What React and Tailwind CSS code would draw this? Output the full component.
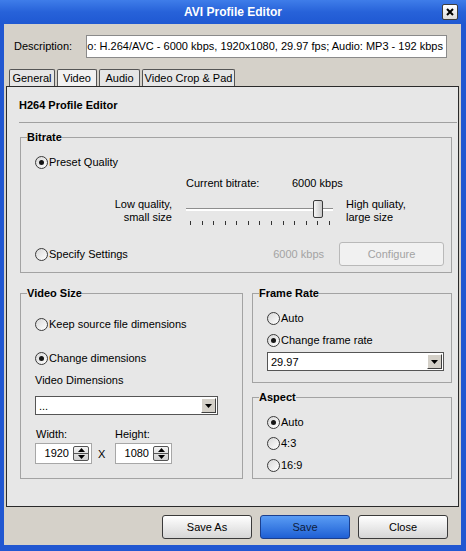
import React from 'react';

// small pieces of the classic dialog chrome
function Radio({ checked, label }) {
  return (
    <div className="flex h-[16px] items-center">
      <span className="flex h-[13px] w-[13px] items-center justify-center rounded-full border border-[#3a3a3a] bg-linear-to-br from-[#d8d8d8] to-[#ffffff]">
        {checked && <span className="h-[5px] w-[5px] rounded-full bg-[#151515]" />}
      </span>
      <span className="ml-[1px]">{label}</span>
    </div>
  );
}

function Group({ title, className, children }) {
  return (
    <fieldset className={`min-w-0 border border-[#a3a3a3] ${className}`}>
      <legend className="ml-[6px] font-bold leading-[14px]">{title}</legend>
      {children}
    </fieldset>
  );
}

function DropArrow() {
  return (
    <span className="flex h-[15px] w-[15px] items-center justify-center border border-t-white border-l-white border-r-[#404040] border-b-[#404040] bg-[#d4d0c8]">
      <svg width="7" height="4" viewBox="0 0 7 4">
        <path d="M0 0h7L3.5 4z" fill="#000" />
      </svg>
    </span>
  );
}

function Select({ value, className }) {
  return (
    <div className={`flex h-[19px] items-center justify-between border border-[#555] bg-white pl-[3px] pr-px ${className}`}>
      <span className="leading-[14px]">{value}</span>
      <DropArrow />
    </div>
  );
}

function Spin({ value }) {
  return (
    <div className="flex h-[21px] w-[57px] items-center justify-end border border-[#a7a7a7] bg-white pr-[2px]">
      <span className="mr-[4px]">{value}</span>
      <div className="flex h-[15px] w-[16px] flex-col rounded-[2px] border border-[#555] bg-linear-to-b from-[#f4f4f4] to-[#cfcfcf]">
        <span className="flex flex-1 items-center justify-center border-b border-[#555]">
          <svg width="7" height="4" viewBox="0 0 7 4">
            <path d="M0 4h7L3.5 0z" fill="#000" />
          </svg>
        </span>
        <span className="flex flex-1 items-center justify-center">
          <svg width="7" height="4" viewBox="0 0 7 4">
            <path d="M0 0h7L3.5 4z" fill="#000" />
          </svg>
        </span>
      </div>
    </div>
  );
}

function Slider() {
  const ticks = Array.from({ length: 13 });
  return (
    <div className="relative h-[28px] w-[147px]">
      <div className="absolute left-0 right-0 top-[10px] h-[3px] border-t border-[#8e8e8e] bg-white" />
      <div className="absolute left-[127px] top-[2px] h-[18px] w-[10px] rounded-[2px] border border-[#3a3a3a] bg-linear-to-r from-[#f6f6f6] to-[#c9c9c9]" />
      <div className="absolute left-[4px] right-[3px] top-[23px] flex justify-between">
        {ticks.map((_, i) => (
          <span key={i} className="h-[4px] w-px bg-[#333]" />
        ))}
      </div>
    </div>
  );
}

function Button({ children, primary }) {
  const look = primary
    ? 'border-[#1b3f8e] bg-linear-to-b from-[#5a9cf4] to-[#1e5fd4] text-[#0d1c3d]'
    : 'border-[#3a3a3a] bg-linear-to-b from-[#ffffff] to-[#d6d6d6] text-black';
  return (
    <button className={`flex h-[24px] w-[90px] items-center justify-center rounded-[3px] border ${look}`}>
      {children}
    </button>
  );
}

const tabs = [
  { name: 'General', w: 'w-[46px]' },
  { name: 'Video', w: 'w-[40px]', active: true },
  { name: 'Audio', w: 'w-[41px]' },
  { name: 'Video Crop & Pad', w: 'w-[93px]' },
];

export default function App() {
  return (
    <div className="flex h-[551px] w-[466px] flex-col bg-[#2157d1] font-['Liberation_Sans',Arial,sans-serif] text-[11px] text-black">
      {/* Title bar */}
      <div className="flex h-[24px] items-center bg-linear-to-b from-[#3f7de9] via-[#2762d9] to-[#1f58d2] pr-[8px]">
        <div className="w-[16px]" />
        <div className="flex-1 pl-[8px] text-center text-[12px] font-bold text-white">AVI Profile Editor</div>
        <div className="flex h-[16px] w-[16px] items-center justify-center rounded-[2px] border border-[#3d3d3d] bg-linear-to-b from-[#ffffff] to-[#dcdcdc]">
          <svg width="8" height="8" viewBox="0 0 8 8">
            <path d="M1 1l6 6M7 1L1 7" stroke="#000" strokeWidth="2" />
          </svg>
        </div>
      </div>

      {/* Body */}
      <div className="mb-[6px] ml-[4px] mr-[5px] flex flex-1 flex-col bg-[#d5d1c9]">
        <div className="flex items-center pl-[10px] pt-[11px]">
          <span className="w-[72px]">Description:</span>
          <div className="flex h-[23px] w-[361px] items-center justify-end overflow-hidden whitespace-nowrap border border-[#8a8a8a] bg-white pr-[3px]">
            o: H.264/AVC - 6000 kbps, 1920x1080, 29.97 fps; Audio: MP3 - 192 kbps
          </div>
        </div>

        {/* Tabs */}
        <div className="mt-[11px] flex h-[17px] gap-[2px] pl-[5px]">
          {tabs.map((t) => (
            <div
              key={t.name}
              className={`flex items-center justify-center rounded-t-[2px] border border-b-0 border-[#555] ${t.w} ${t.active ? 'bg-[#f2f2f2]' : 'bg-[#e6e6e6]'}`}
            >
              {t.name}
            </div>
          ))}
        </div>

        {/* Tab panel */}
        <div className="mx-[2px] flex flex-1 flex-col border border-[#2a2a2a] bg-[#e7e7e7] pl-[12px] pr-px pt-[12px]">
          <div className="font-bold leading-[13px]">H264 Profile Editor</div>
          <div className="mt-[10px] h-px bg-[#a0a0a0]" />

          <div className="ml-px mr-[5px]">
            <Group title="Bitrate" className="mt-[7px] pb-[6px]">
              <div className="pl-[14px] pt-[10px]">
                <Radio checked label="Preset Quality" />
              </div>
              <div className="mt-[6px] flex pl-[165px] leading-[14px]">
                <span className="w-[106px]">Current bitrate:</span>
                <span>6000 kbps</span>
              </div>
              <div className="mt-[8px] flex">
                <div className="w-[151px] text-right leading-[13px]">
                  Low quality,
                  <br />
                  small size
                </div>
                <div className="ml-[14px]">
                  <Slider />
                </div>
                <div className="ml-[13px] leading-[13px]">
                  High quliaty,
                  <br />
                  large size
                </div>
              </div>
              <div className="mt-[16px] flex h-[24px] items-center pl-[14px] pr-[7px]">
                <Radio label="Specify Settings" />
                <span className="ml-auto text-[#a3a3a3]">6000 kbps</span>
                <button className="ml-[15px] h-[24px] w-[105px] rounded-[3px] border border-[#b9b9b9] bg-[#f1f1f1] text-[#a3a3a3]">
                  Configure
                </button>
              </div>
            </Group>

            <div className="mt-[13px] flex gap-[9px]">
              <Group title="Video Size" className="w-[223px] pb-[14px]">
                <div className="pl-[14px]">
                  <div className="mt-[16px]">
                    <Radio label="Keep source file dimensions" />
                  </div>
                  <div className="mt-[18px]">
                    <Radio checked label="Change dimensions" />
                  </div>
                  <div className="mt-[7px] leading-[14px]">Video Dimensions</div>
                  <Select value="..." className="mt-[9px] w-[183px]" />
                  <div className="mt-[12px] flex leading-[14px]">
                    <span className="w-[80px] pl-px">Width:</span>
                    <span>Height:</span>
                  </div>
                  <div className="mt-[2px] flex items-center">
                    <Spin value="1920" />
                    <span className="w-[23px] pl-[6px] pt-[2px]">X</span>
                    <Spin value="1080" />
                  </div>
                </div>
              </Group>

              <div className="flex w-[200px] flex-col">
                <Group title="Frame Rate" className="pb-[11px]">
                  <div className="pl-[14px] pr-[7px]">
                    <div className="mt-[10px]">
                      <Radio label="Auto" />
                    </div>
                    <div className="mt-[6px]">
                      <Radio checked label="Change frame rate" />
                    </div>
                    <Select value="29.97" className="mt-[4px] w-full" />
                  </div>
                </Group>
                <Group title="Aspect" className="mt-[7px] pb-[5px]">
                  <div className="pl-[14px]">
                    <div className="mt-[10px]">
                      <Radio checked label="Auto" />
                    </div>
                    <div className="mt-[5px]">
                      <Radio label="4:3" />
                    </div>
                    <div className="mt-[6px]">
                      <Radio label="16:9" />
                    </div>
                  </div>
                </Group>
              </div>
            </div>
          </div>
        </div>

        {/* Buttons */}
        <div className="flex justify-end gap-[8px] pb-[6px] pr-[13px] pt-[8px]">
          <Button>Save As</Button>
          <Button primary>Save</Button>
          <Button>Close</Button>
        </div>
      </div>
    </div>
  );
}
